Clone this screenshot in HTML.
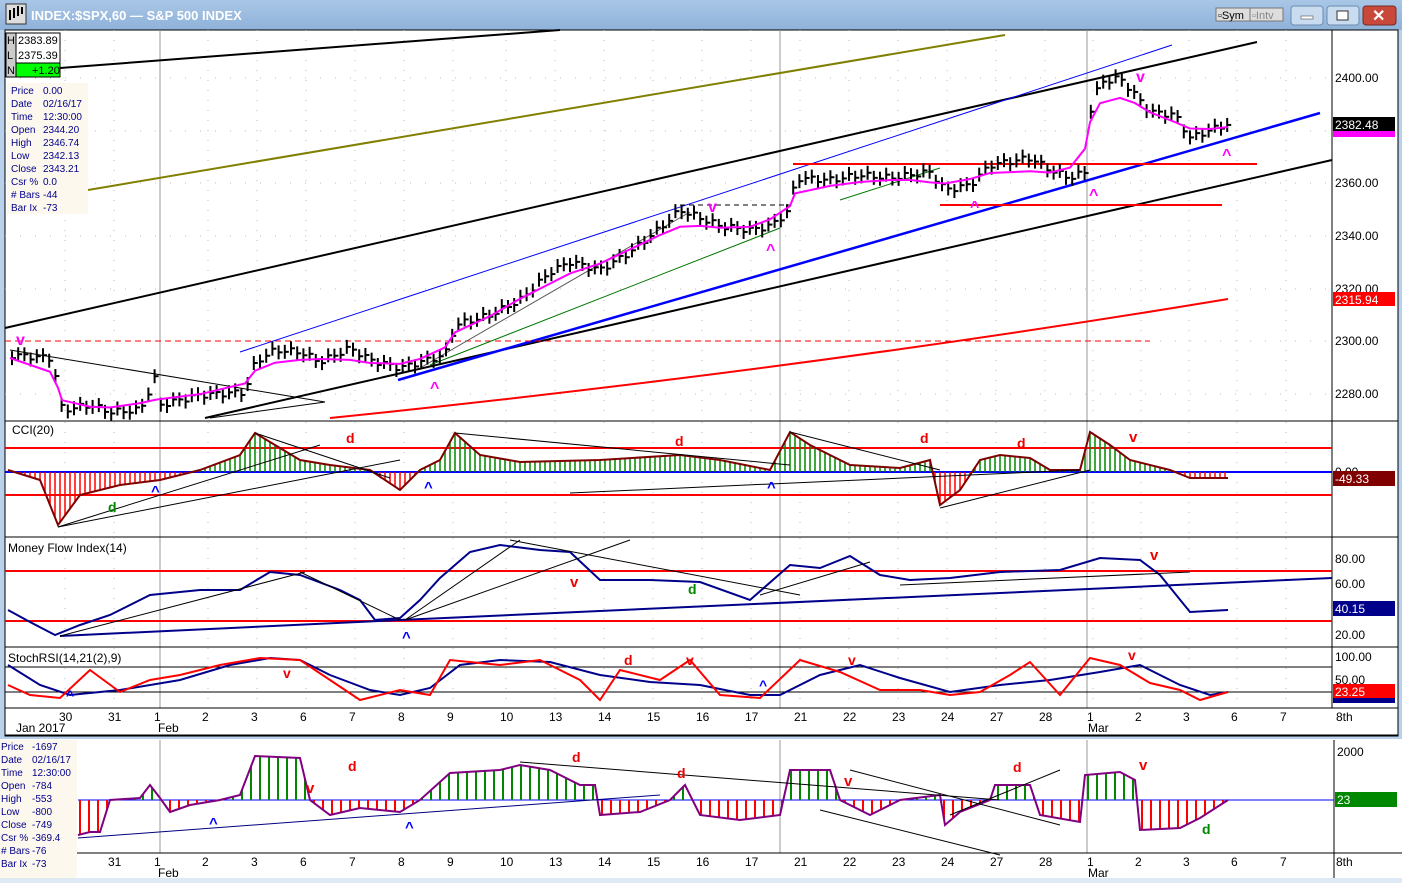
<!DOCTYPE html>
<html><head><meta charset="utf-8"><style>
body{margin:0;width:1402px;height:883px;overflow:hidden;background:#dfe9f5;font-family:"Liberation Sans",sans-serif}
svg{position:absolute;left:0;top:0}
</style></head><body>
<svg id="s" width="1402" height="883" xmlns="http://www.w3.org/2000/svg" font-family="Liberation Sans, sans-serif" font-size="12">
<defs><linearGradient id="tb" x1="0" y1="0" x2="0" y2="1"><stop offset="0" stop-color="#a9c6e6"/><stop offset="1" stop-color="#8fb2da"/></linearGradient></defs>
<rect x="0" y="0" width="1402" height="740" fill="#b9d1ea"/>
<rect x="0" y="0" width="1402" height="30" fill="url(#tb)"/>
<rect x="6" y="4" width="20" height="20" fill="#ddd" stroke="#333"/>
<path d="M10 20V10M14 18V8M18 16V6M22 14V7" stroke="#000" stroke-width="2"/>
<text x="31" y="20" fill="#fff" font-size="13" font-weight="bold">INDEX:$SPX,60 — S&amp;P 500 INDEX</text>
<rect x="1216" y="8" width="34" height="13" fill="#ddd" stroke="#777"/><text x="1218" y="19" font-size="11">▫Sym</text>
<rect x="1250" y="8" width="33" height="13" fill="#ddd" stroke="#777"/><text x="1252" y="19" font-size="11" fill="#888">▫Intv</text>
<rect x="1291" y="6" width="32" height="19" rx="3" fill="#c9dbee" stroke="#6c8bb0"/><rect x="1301" y="16" width="12" height="3" fill="#fff" stroke="#333" stroke-width=".5"/>
<rect x="1327" y="6" width="32" height="19" rx="3" fill="#c9dbee" stroke="#6c8bb0"/><rect x="1337" y="11" width="11" height="9" fill="#fff" stroke="#333"/>
<rect x="1363" y="6" width="33" height="19" rx="3" fill="#c8483a" stroke="#7a2a22"/><text x="1372" y="21" fill="#fff" font-size="16" font-weight="bold">✕</text>
<rect x="5" y="30" width="1393" height="706" fill="#fff" stroke="#000"/>
<rect x="0" y="739" width="1402" height="144" fill="#fff"/>
<rect x="0" y="878" width="1402" height="5" fill="#dfe9f5"/>
<g id="g"></g>
</svg>
<script>
const g=document.getElementById('g');const NS='http://www.w3.org/2000/svg';
function el(t,a,txt){const e=document.createElementNS(NS,t);for(const k in a)e.setAttribute(k,a[k]);if(txt!=null)e.textContent=txt;g.appendChild(e);return e}
function L(x1,y1,x2,y2,c,w,d){el('line',{x1,y1,x2,y2,stroke:c,'stroke-width':w||1,'stroke-dasharray':d||''})}
function T(x,y,s,c,o){el('text',Object.assign({x,y,fill:c||'#000'},o||{}),s)}
function interp(pts,x){for(let i=1;i<pts.length;i++){if(x<=pts[i][0]){const a=pts[i-1],b=pts[i];return a[1]+(b[1]-a[1])*(x-a[0])/(b[0]-a[0]||1)}}return pts[pts.length-1][1]}
function PL(pts,c,w){el('polyline',{points:pts.map(p=>p.join(',')).join(' '),fill:'none',stroke:c,'stroke-width':w||1})}
const dx=[[65,'30'],[114,'31'],[160,'1'],[208,'2'],[257,'3'],[306,'6'],[355,'7'],[404,'8'],[453,'9'],[506,'10'],[555,'13'],[604,'14'],[653,'15'],[702,'16'],[751,'17'],[800,'21'],[849,'22'],[898,'23'],[947,'24'],[996,'27'],[1045,'28'],[1093,'1'],[1141,'2'],[1189,'3'],[1237,'6'],[1286,'7'],[1342,'8th']];
[[30,420],[422,536],[538,647],[648,708]].forEach(([a,b])=>{dx.forEach(d=>{if(d[0]<1330)L(d[0],a,d[0],b,'#bbb',1,'1 9')});});
[78,131,183,236,289,341,394].forEach(y=>L(5,y,1332,y,'#bbb',1,'1 14'));
[160,780,1087].forEach(x=>{L(x,30,x,708,'#999',1);L(x,740,x,853,'#999',1)});
[421,537,647,708].forEach(y=>L(5,y,1398,y,'#000',1));
L(1332,30,1332,708,'#000',1);L(5,735,1398,735,'#000',1);
L(0,853,1402,853,'#000',1);L(1334,740,1334,878,'#000',1);
dx.forEach(d=>{T(d[0]-6,721,d[1],'#000');T(d[0]-6,866,d[1],'#000')});
T(16,732,'Jan 2017');T(158,732,'Feb');T(1088,732,'Mar');T(10,877,'Jan 2017');T(158,877,'Feb');T(1088,877,'Mar');
L(60,68,560,30,'#000',2);L(5,328,1257,42,'#000',2);L(205,418,1332,160,'#000',2);
L(88,190,1005,35,'#808000',2);L(240,352,1172,45,'#0000ff',1);L(398,380,1320,113,'#0000ff',2.5);
L(5,341,1150,341,'#f00',1,'6 4');L(793,164,1257,164,'#f00',2);L(940,205,1222,205,'#f00',2);L(680,205,790,205,'#000',1,'5 4');
L(430,365,780,228,'#070',1);L(420,368,690,212,'#555',1);L(840,200,940,168,'#070',1);L(10,350,325,402,'#000',1);L(210,418,325,402,'#000',1);
el('path',{d:'M330 418 Q800 370 1228 299',fill:'none',stroke:'#f00','stroke-width':2});
const P=[[10,355],[50,358],[58,385],[62,410],[90,405],[110,412],[140,410],[155,378],[160,405],[200,395],[245,392],[255,362],[275,350],[300,352],[320,362],[350,348],[370,360],[400,368],[420,362],[445,355],[455,325],[490,315],[520,300],[550,272],[570,262],[600,270],[630,252],[660,228],[680,210],[700,218],[720,226],[750,230],[770,226],[790,210],[795,178],[830,180],[860,175],[890,178],[910,175],[930,172],[945,190],[970,185],[990,165],[1030,158],[1050,170],[1070,178],[1085,172],[1090,112],[1100,82],[1120,78],[1135,95],[1150,112],[1175,115],[1190,138],[1210,130],[1228,124]];
for(let x=12;x<=1228;x+=6.2){const y=interp(P,x)+Math.sin(x*1.7)*3;L(x,y-7,x,y+7,'#000',2);L(x,y,x+4,y,'#000',2)}
const MA=P.map(p=>[p[0],p[1]]);for(let k=0;k<3;k++)for(let i=1;i<MA.length-1;i++)MA[i][1]=(MA[i-1][1]+MA[i][1]*2+MA[i+1][1])/4;
PL(MA.map(p=>[p[0],p[1]+3]),'#f0f',2);
[[20,345,'v'],[712,212,'v'],[1140,82,'v'],[434,393,'^'],[770,255,'^'],[974,212,'^'],[1093,200,'^'],[1226,160,'^']].forEach(a=>T(a[0]-4,a[1],a[2],'#f0f',{'font-size':16,'font-weight':'bold'}));
el('rect',{x:6,y:33,width:54,height:44,fill:'#fff',stroke:'#000'});el('rect',{x:16,y:63,width:44,height:14,fill:'#0f0',stroke:'#000'});
el('rect',{x:6,y:33,width:10,height:44,fill:'#ccc',stroke:'#000'});
T(7,44,'H',null,{'font-size':11});T(18,44,'2383.89',null,{'font-size':11});T(7,59,'L',null,{'font-size':11});T(18,59,'2375.39',null,{'font-size':11});T(7,74,'N',null,{'font-size':11});T(32,74,'+1.20',null,{'font-size':11});
el('rect',{x:7,y:83,width:81,height:131,fill:'#fdf8ee'});
[['Price','0.00'],['Date','02/16/17'],['Time','12:30:00'],['Open','2344.20'],['High','2346.74'],['Low','2342.13'],['Close','2343.21'],['Csr %','0.0'],['# Bars','-44'],['Bar Ix','-73']].forEach((r,i)=>{T(11,94+i*13,r[0],'#00008b',{'font-size':10});T(43,94+i*13,r[1],'#00008b',{'font-size':10})});
el('rect',{x:0,y:740,width:77,height:138,fill:'#fdf8ee'});
[['Price','-1697'],['Date','02/16/17'],['Time','12:30:00'],['Open','-784'],['High','-553'],['Low','-800'],['Close','-749'],['Csr %','-369.4'],['# Bars','-76'],['Bar Ix','-73']].forEach((r,i)=>{T(1,750+i*13,r[0],'#00008b',{'font-size':10});T(32,750+i*13,r[1],'#00008b',{'font-size':10})});
[[78,'2400.00'],[183,'2360.00'],[236,'2340.00'],[289,'2320.00'],[341,'2300.00'],[394,'2280.00']].forEach(a=>T(1335,a[0]+4,a[1]));
el('rect',{x:1333,y:117,width:62,height:14,fill:'#000'});T(1335,129,'2382.48','#fff');el('rect',{x:1333,y:131,width:62,height:6,fill:'#f0f'});
el('rect',{x:1333,y:292,width:62,height:14,fill:'#f00'});T(1335,304,'2315.94','#fff');
L(5,448,1332,448,'#f00',2);L(5,495,1332,495,'#f00',2);L(5,472,1332,472,'#00f',2);
const C=[[8,470],[40,480],[58,525],[80,495],[120,485],[160,480],[200,470],[240,455],[255,433],[275,445],[300,460],[330,465],[370,470],[400,490],[420,470],[440,460],[455,433],[480,455],[520,462],[600,460],[680,455],[720,460],[770,470],[790,432],[810,445],[850,465],[900,468],[930,460],[940,505],[960,490],[980,460],[1000,455],[1030,458],[1050,470],[1080,470],[1090,432],[1110,445],[1130,460],[1170,470],[1190,478],[1228,478]];
for(let x=10;x<=1228;x+=5){const y=interp(C,x);L(x,472,x,y,y<472?'#080':'#f00',1.5)}
PL(C,'#800000',2);
L(58,527,400,460,'#000',1);L(58,527,320,445,'#000',1);L(255,433,390,478,'#000',1);L(455,433,790,465,'#000',1);L(570,493,1080,470,'#000',1);L(790,432,940,470,'#000',1);L(940,508,1090,470,'#000',1);
T(12,434,'CCI(20)');
[[350,443,'d','#e00'],[679,446,'d','#e00'],[924,443,'d','#e00'],[1021,448,'d','#e00'],[112,512,'d','#080']].forEach(a=>T(a[0]-4,a[1],a[2],a[3],{'font-size':14,'font-weight':'bold'}));
[[155,496,'^','#00f'],[428,492,'^','#00f'],[771,492,'^','#00f'],[1133,442,'v','#e00']].forEach(a=>T(a[0]-4,a[1],a[2],a[3],{'font-size':15,'font-weight':'bold'}));
T(1335,476,'0.00');el('rect',{x:1333,y:471,width:62,height:15,fill:'#800000'});T(1335,483,'-49.33','#fff');
L(5,571,1332,571,'#f00',2);L(5,621,1332,621,'#f00',2);L(400,620,1332,578,'#00008b',2);L(60,636,400,620,'#00008b',2);
const M=[[8,610],[30,622],[55,635],[80,625],[110,615],[150,595],[200,590],[240,590],[270,572],[300,575],[340,590],[360,600],[375,620],[400,618],[420,600],[440,578],[470,552],[500,545],[540,550],[570,552],[600,580],[650,580],[700,582],[750,600],[790,565],[820,568],[850,556],[880,575],[910,580],[950,578],[1000,572],[1060,570],[1100,558],[1140,560],[1160,575],[1190,612],[1228,610]];
PL(M,'#00008b',2);
L(60,636,305,572,'#000',1);L(405,620,520,540,'#000',1);L(405,620,630,540,'#000',1);L(300,572,400,620,'#000',1);L(510,540,800,595,'#000',1);L(760,595,870,562,'#000',1);L(900,585,1190,572,'#000',1);
T(8,552,'Money Flow Index(14)');
T(570,587,'v','#e00',{'font-size':15,'font-weight':'bold'});T(1150,560,'v','#e00',{'font-size':15,'font-weight':'bold'});T(688,594,'d','#080',{'font-size':14,'font-weight':'bold'});T(402,642,'^','#00f',{'font-size':15,'font-weight':'bold'});
[[559,'80.00'],[584,'60.00'],[635,'20.00']].forEach(a=>T(1335,a[0]+4,a[1]));
el('rect',{x:1333,y:601,width:62,height:15,fill:'#00008b'});T(1335,613,'40.15','#fff');
L(5,667,1332,667,'#000',1);L(5,692,1332,692,'#000',1);
const S1=[[8,665],[40,685],[70,695],[120,690],[180,680],[230,665],[270,658],[300,660],[330,675],[370,690],[400,695],[430,688],[460,665],[500,660],[550,662],[600,675],[650,682],[700,685],[750,695],[780,695],[820,675],[860,665],[900,678],[950,692],[1000,685],[1050,680],[1100,672],[1140,665],[1180,685],[1210,695],[1228,692]];
const S2=[[8,685],[30,695],[60,698],[90,670],[120,692],[150,680],[180,675],[220,665],[260,658],[300,660],[330,680],[360,700],[400,690],[430,695],[450,660],[500,665],[540,660],[580,680],[600,700],[620,670],[660,680],[690,660],[720,695],[760,698],[800,660],[840,672],[880,690],[920,690],[950,695],[980,692],[1010,675],[1030,662],[1060,695],[1090,658],[1120,665],[1150,683],[1180,690],[1200,700],[1228,692]];
PL(S1,'#00008b',2);PL(S2,'#f00',2);
T(8,662,'StochRSI(14,21(2),9)');
[[287,678,'v','#e00'],[628,665,'d','#e00'],[690,665,'v','#e00'],[852,665,'v','#e00'],[1132,660,'v','#e00'],[70,700,'^','#00f'],[763,690,'^','#00f']].forEach(a=>T(a[0]-4,a[1],a[2],a[3],{'font-size':14,'font-weight':'bold'}));
T(1335,661,'100.00');T(1335,684,'50.00');el('rect',{x:1333,y:684,width:62,height:14,fill:'#f00'});T(1335,696,'23.25','#fff');el('rect',{x:1333,y:698,width:62,height:5,fill:'#00008b'});
L(78,800,1334,800,'#00f',1);
const B=[[78,835],[90,832],[100,832],[110,800],[140,798],[150,785],[160,798],[170,812],[190,805],[220,800],[240,795],[255,756],[300,758],[310,800],[330,815],[360,808],[400,812],[420,800],[450,773],[500,770],[520,765],[550,770],[580,785],[595,785],[600,815],[640,812],[670,800],[685,785],[700,815],[740,820],[780,815],[790,770],[830,770],[840,800],[870,815],[900,800],[940,795],[945,825],[960,812],[990,800],[995,785],[1030,785],[1040,815],[1080,822],[1085,775],[1120,772],[1135,780],[1140,830],[1180,828],[1200,818],[1228,800]];
for(let x=80;x<=1228;x+=9){const y=interp(B,x);L(x,800,x,y,y<800?'#080':'#f00',2)}
PL(B,'#800080',2);
L(78,838,660,795,'#000080',1);L(520,762,1000,800,'#000',1);L(820,810,1000,855,'#000',1);L(850,770,1060,825,'#000',1);L(950,815,1060,770,'#000',1);
[[576,762,'d','#e00'],[352,771,'d','#e00'],[681,778,'d','#e00'],[1017,772,'d','#e00'],[1206,834,'d','#080']].forEach(a=>T(a[0]-4,a[1],a[2],a[3],{'font-size':14,'font-weight':'bold'}));
[[310,793,'v','#e00'],[848,786,'v','#e00'],[1143,770,'v','#e00'],[213,828,'^','#00f'],[409,832,'^','#00f']].forEach(a=>T(a[0]-4,a[1],a[2],a[3],{'font-size':15,'font-weight':'bold'}));
T(1337,756,'2000');el('rect',{x:1335,y:792,width:62,height:15,fill:'#080'});T(1337,804,'23','#fff');
</script>
</body></html>
